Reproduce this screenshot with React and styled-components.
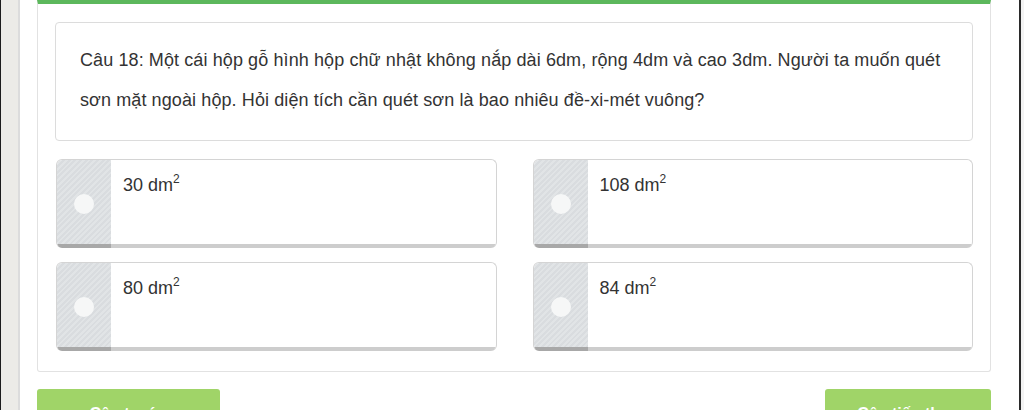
import React from "react";
import styled, { createGlobalStyle } from "styled-components";

const Global = createGlobalStyle`
  html, body { margin: 0; padding: 0; background: #fff; }
  body { font-family: "Liberation Sans", Arial, sans-serif; overflow: hidden; }
  #root { height: 410px; }
`;

const Page = styled.div`
  display: flex;
  height: 410px;
  overflow: hidden;
`;

const LeftRail = styled.div`
  width: 17px;
  flex: 0 0 17px;
  background: #ecebe7;
  border-left: 1px solid #1c1c1c;
  border-right: 2px solid #dcdcdc;
`;

const RightRail = styled.div`
  width: 3px;
  flex: 0 0 3px;
  border-left: 2px solid #2a2a2a;
  background: #f3f3f3;
`;

const Content = styled.div`
  flex: 1;
  padding: 0 28px 0 17px;
  display: flex;
  flex-direction: column;
  gap: 17px;
`;

const Card = styled.div`
  border: 1px solid #e2e2e2;
  border-top: 4px solid #5cb85c;
  border-radius: 0 0 3px 3px;
  padding: 18px 17px 20px 17px;
  display: flex;
  flex-direction: column;
  gap: 18px;
`;

const Question = styled.div`
  border: 1px solid #dcdcdc;
  border-radius: 4px;
  padding: 17px 20px 20px 24px;
  font-size: 18px;
  letter-spacing: 0.1px;
  line-height: 40px;
  color: #333;
`;

const Options = styled.div`
  display: grid;
  grid-template-columns: 1fr 1fr;
  column-gap: 36px;
  row-gap: 14px;
  padding: 0 0 0 1px;
`;

const Option = styled.div`
  display: flex;
  height: 88px;
  border: 1px solid #d4d4d4;
  border-bottom: none;
  border-radius: 6px;
  overflow: hidden;
  background: #fff;
`;

const Marker = styled.div`
  width: 54px;
  flex: 0 0 54px;
  display: flex;
  align-items: center;
  justify-content: center;
  background: repeating-linear-gradient(
    135deg,
    #d9dcdf 0px,
    #d9dcdf 2px,
    #e1e4e6 2px,
    #e1e4e6 4px
  );
  border-bottom: 4px solid #a8a8a8;
`;

const Dot = styled.span`
  width: 20px;
  height: 20px;
  border-radius: 50%;
  background: #f6f7f7;
  margin-top: 4px;
`;

const Answer = styled.div`
  flex: 1;
  padding: 12px 12px 0 12px;
  font-size: 18px;
  line-height: 26px;
  color: #333;
  border-bottom: 4px solid #cdcdcd;
  sup { font-size: 12px; line-height: 0; vertical-align: 8px; }
`;

const Actions = styled.div`
  display: flex;
  justify-content: space-between;
`;

const NavButton = styled.div`
  width: ${(p) => p.$w}px;
  height: 40px;
  background: #a0d468;
  border-radius: 3px 3px 0 0;
  color: #fff;
  font-size: 16px;
  font-weight: bold;
  text-align: center;
  padding-top: 16px;
  box-sizing: border-box;
`;

const answers = ["30", "108", "80", "84"];

export default function App() {
  return (
    <>
      <Global />
      <Page>
        <LeftRail />
        <Content>
          <Card>
            <Question>
              Câu 18: Một cái hộp gỗ hình hộp chữ nhật không nắp dài 6dm, rộng 4dm và cao 3dm. Người ta muốn quét sơn mặt ngoài hộp. Hỏi diện tích cần quét sơn là bao nhiêu đề-xi-mét vuông?
            </Question>
            <Options>
              {answers.map((a) => (
                <Option key={a}>
                  <Marker>
                    <Dot />
                  </Marker>
                  <Answer>
                    {a} dm<sup>2</sup>
                  </Answer>
                </Option>
              ))}
            </Options>
          </Card>
          <Actions>
            <NavButton $w={183}>Câu trước</NavButton>
            <NavButton $w={166}>Câu tiếp theo</NavButton>
          </Actions>
        </Content>
        <RightRail />
      </Page>
    </>
  );
}
